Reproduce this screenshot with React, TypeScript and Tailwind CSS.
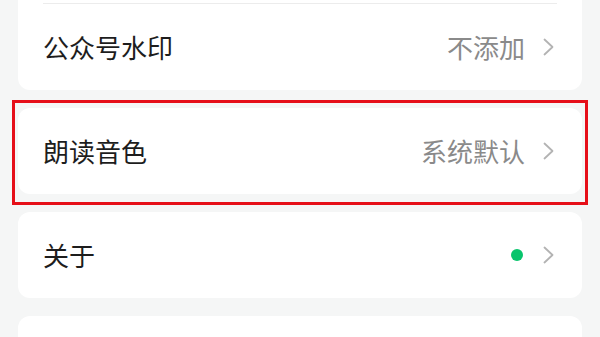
import { type ReactNode } from 'react';

const font = { fontFamily: '"Noto Sans CJK SC", "Noto Sans", sans-serif' };

function Chevron() {
    return (
        <svg width="11" height="18" viewBox="0 0 11 18" fill="none" className="shrink-0">
            <polyline points="1.5,1.5 9.5,9 1.5,16.5" stroke="#b3b3b3" strokeWidth="1.8" strokeLinecap="round" strokeLinejoin="round" />
        </svg>
    );
}

function Row({ label, children }: { label: string; children?: ReactNode }) {
    return (
        <div className="flex h-[86px] items-center justify-between pl-[25px] pr-[28px]">
            <span className="text-[26px] leading-none text-[#1d1d1d]">{label}</span>
            <div className="flex items-center gap-[18px]">
                {children}
                <Chevron />
            </div>
        </div>
    );
}

export default function App() {
    return (
        <div className="h-[337px] w-[600px] overflow-hidden bg-[#f5f6f6] px-[18px]" style={font}>
            <div className="flex flex-col gap-[18px]">
                {/* ── Card: watermark ───────────────────────────── */}
                <div className="rounded-b-xl bg-white pt-[3px]">
                    <div className="mx-[25px] border-t border-[#ececec]" />
                    <Row label="公众号水印">
                        <span className="text-[26px] leading-none text-[#8a8a8a]">不添加</span>
                    </Row>
                </div>

                {/* ── Card: voice (highlighted) ─────────────────── */}
                <div className="relative rounded-xl bg-white">
                    <Row label="朗读音色">
                        <span className="text-[26px] leading-none text-[#8a8a8a]">系统默认</span>
                    </Row>
                    <div className="pointer-events-none absolute -top-[8px] -right-[6px] -bottom-[11px] -left-[6px] border-[3px] border-[#e60f19]" />
                </div>

                {/* ── Card: about ───────────────────────────────── */}
                <div className="rounded-xl bg-white">
                    <Row label="关于">
                        <span className="mr-[2px] size-[12px] rounded-full bg-[#08c46c]" />
                    </Row>
                </div>

                {/* ── Card: next (cut off) ──────────────────────── */}
                <div className="h-[86px] rounded-xl bg-white" />
            </div>
        </div>
    );
}
